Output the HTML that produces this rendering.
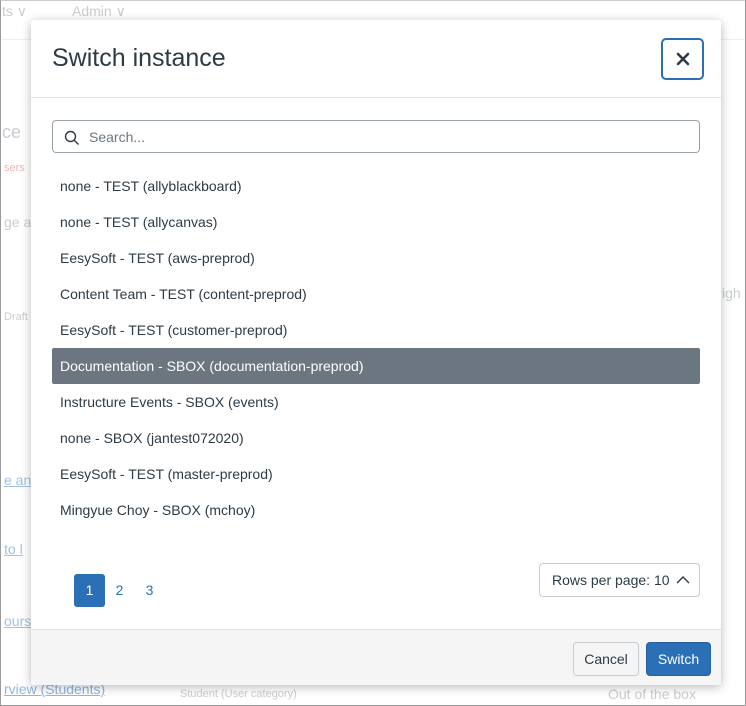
<!DOCTYPE html>
<html><head><style>
*{box-sizing:border-box;margin:0;padding:0}
body{width:746px;height:706px;background:#fff;font-family:"Liberation Sans",sans-serif;position:relative;overflow:hidden;color:#2d3b45}
.frame{position:absolute;left:0;top:0;width:746px;height:706px;border:1px solid #9a9a9a;border-top:1px solid #ccc}
.bg{position:absolute;color:#c8cdd1;font-size:14px}
.hl{position:absolute;height:1px;background:#eee}
.modal{position:absolute;left:31px;top:20px;width:690px;height:665px;background:#fff;border-radius:3px;box-shadow:0 2px 10px rgba(0,0,0,.28)}
.hdr{height:78px;border-bottom:1px solid #e0e3e6;position:relative}
.hdr h1{position:absolute;left:21px;top:24px;font-size:25px;font-weight:normal;color:#2d3b45}
.close{position:absolute;left:630px;top:18px;width:43px;height:42px;border:2px solid #2b6fb6;border-radius:5px;display:flex;align-items:center;justify-content:center}
.search{position:absolute;left:21px;top:100px;width:648px;height:33px;border:1px solid #9aa3aa;border-radius:4px}
.search span{position:absolute;left:36px;top:8px;font-size:14px;color:#6b7780}
.row{position:absolute;left:21px;width:648px;height:36px;font-size:14px;line-height:36px;padding-left:8px;color:#2d3b45}
.row.sel{background:#6b7680;color:#fff;border-radius:2px}
.pg{position:absolute;top:554px;width:31px;height:33px;font-size:14px;line-height:33px;text-align:center;color:#2b6fb6}
.rpp{position:absolute;left:508px;top:543px;width:161px;height:34px;border:1px solid #c7cdd1;border-radius:4px;font-size:14px;line-height:32px;padding-left:12px}
.ftr{position:absolute;left:0;top:609px;width:690px;height:56px;background:#f5f5f5;border-top:1px solid #dde0e3;border-radius:0 0 3px 3px}
.btn{position:absolute;top:12px;height:34px;border-radius:4px;font-size:14px;line-height:32px;text-align:center}
</style></head><body>
<div class="frame"></div>
<div class="bg" style="left:2px;top:3px">ts ∨</div>
<div class="bg" style="left:72px;top:3px">Admin ∨</div>
<div class="hl" style="left:2px;top:39px;width:742px"></div>
<div class="bg" style="left:2px;top:122px;font-size:18px">ce</div>
<div class="bg" style="left:4px;top:162px;font-size:11px;color:#f0b4b4">sers</div>
<div class="bg" style="left:4px;top:214px">ge a</div>
<div class="bg" style="left:4px;top:311px;font-size:11px">Draft</div>
<div class="bg" style="left:722px;top:285px">igh</div>
<div class="bg" style="left:4px;top:472px;color:#9fc2e6;text-decoration:underline">e an</div>
<div class="bg" style="left:4px;top:541px;color:#9fc2e6;text-decoration:underline">to l</div>
<div class="bg" style="left:4px;top:613px;color:#9fc2e6;text-decoration:underline">ours</div>
<div class="bg" style="left:4px;top:681px;color:#8fb6de;text-decoration:underline">rview (Students)</div>
<div class="bg" style="left:180px;top:688px;font-size:11px">Student (User category)</div>
<div class="bg" style="left:608px;top:686px">Out of the box</div>
<div class="modal">
<div class="hdr"><h1>Switch instance</h1>
<div class="close"><svg width="14" height="14" viewBox="0 0 14 14"><path d="M2 2L12 12M12 2L2 12" stroke="#2d3b45" stroke-width="2.6" stroke-linecap="round"/></svg></div></div>
<div class="search"><svg style="position:absolute;left:11px;top:9px" width="16" height="16" viewBox="0 0 16 16"><circle cx="6.5" cy="6.5" r="5" fill="none" stroke="#2d3b45" stroke-width="1.4"/><path d="M10.2 10.2L14.5 14.5" stroke="#2d3b45" stroke-width="1.4"/></svg><span>Search...</span></div>
<div class="row" style="top:148px">none - TEST (allyblackboard)</div>
<div class="row" style="top:184px">none - TEST (allycanvas)</div>
<div class="row" style="top:220px">EesySoft - TEST (aws-preprod)</div>
<div class="row" style="top:256px">Content Team - TEST (content-preprod)</div>
<div class="row" style="top:292px">EesySoft - TEST (customer-preprod)</div>
<div class="row sel" style="top:328px">Documentation - SBOX (documentation-preprod)</div>
<div class="row" style="top:364px">Instructure Events - SBOX (events)</div>
<div class="row" style="top:400px">none - SBOX (jantest072020)</div>
<div class="row" style="top:436px">EesySoft - TEST (master-preprod)</div>
<div class="row" style="top:472px">Mingyue Choy - SBOX (mchoy)</div>
<div class="pg" style="left:43px;background:#2b6fb6;color:#fff;border-radius:3px">1</div>
<div class="pg" style="left:73px">2</div>
<div class="pg" style="left:103px">3</div>
<div class="rpp">Rows per page: 10 <svg style="position:absolute;left:136px;top:11px" width="14" height="9" viewBox="0 0 14 9"><path d="M1 8L7 2L13 8" fill="none" stroke="#2d3b45" stroke-width="1.4"/></svg></div>
<div class="ftr">
<div class="btn" style="left:542px;width:66px;background:#f5f5f5;border:1px solid #c7cdd1;color:#2d3b45">Cancel</div>
<div class="btn" style="left:615px;width:65px;background:#2b6fb6;border:1px solid #2560a0;color:#fff">Switch</div>
</div>
</div>
</body></html>
